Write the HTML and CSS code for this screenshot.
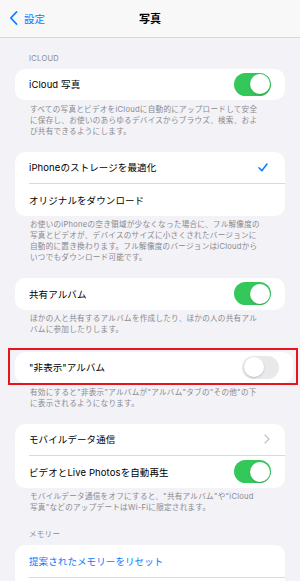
FILE: index.html
```html
<!DOCTYPE html>
<html lang="ja">
<head>
<meta charset="utf-8">
<title>写真</title>
<link rel="stylesheet" href="styles.css">
</head>
<body>
<div class="nav">
  <div class="back">
    <svg class="back-chev" width="9" height="14" viewBox="0 0 9 14"><path d="M7.5 1 L1.8 7 L7.5 13" fill="none" stroke="#0a7aff" stroke-width="1.8" stroke-linecap="round" stroke-linejoin="round"/></svg>
    <span>設定</span>
  </div>
  <div class="title">写真</div>
</div>

<div class="header first">ICLOUD</div>
<div class="card">
  <div class="row"><span class="label">iCloud 写真</span><span class="toggle on"><span class="knob"></span></span></div>
</div>
<div class="desc">すべての写真とビデオをiCloudに自動的にアップロードして安全<br>に保存し、お使いのあらゆるデバイスからブラウズ、検索、およ<br>び共有できるようにします。</div>

<div class="card gap">
  <div class="row"><span class="label">iPhoneのストレージを最適化</span>
    <svg class="check" width="10" height="9" viewBox="0 0 10 9"><path d="M1 4.8 L3.8 7.8 L9 1" fill="none" stroke="#0a7aff" stroke-width="1.5" stroke-linecap="round" stroke-linejoin="round"/></svg>
  </div>
  <div class="row sep"><span class="label">オリジナルをダウンロード</span></div>
</div>
<div class="desc">お使いのiPhoneの空き領域が少なくなった場合に、フル解像度の<br>写真とビデオが、デバイスのサイズに小さくされたバージョンに<br>自動的に置き換わります。フル解像度のバージョンはiCloudから<br>いつでもダウンロード可能です。</div>

<div class="card gap">
  <div class="row"><span class="label">共有アルバム</span><span class="toggle on"><span class="knob"></span></span></div>
</div>
<div class="desc">ほかの人と共有するアルバムを作成したり、ほかの人の共有アル<br>バムに参加したりします。</div>

<div class="highlight">
  <div class="card inner">
    <div class="row"><span class="label">"非表示"アルバム</span><span class="toggle off"><span class="knob"></span></span></div>
  </div>
</div>
<div class="desc d4">有効にすると"非表示"アルバムが"アルバム"タブの"その他"の下<br>に表示されるようになります。</div>

<div class="card gap">
  <div class="row"><span class="label">モバイルデータ通信</span>
    <svg class="chev" width="6" height="10" viewBox="0 0 6 10"><path d="M1 1 L5 5 L1 9" fill="none" stroke="#c4c4c7" stroke-width="1.3" stroke-linecap="round" stroke-linejoin="round"/></svg>
  </div>
  <div class="row sep"><span class="label">ビデオとLive Photosを自動再生</span><span class="toggle on"><span class="knob"></span></span></div>
</div>
<div class="desc">モバイルデータ通信をオフにすると、"共有アルバム"や"iCloud<br>写真"などのアップデートはWi-Fiに限定されます。</div>

<div class="header second">メモリー</div>
<div class="card">
  <div class="row"><span class="label link">提案されたメモリーをリセット</span></div>
  <div class="row sep"></div>
</div>
</body>
</html>
```

FILE: styles.css
```css
html, body {
  margin: 0;
  padding: 0;
}
body {
  background: #f2f2f7;
  font-family: Inter, "Noto Sans CJK JP", sans-serif;
  color: #000;
  width: 300px;
  height: 581px;
  overflow: hidden;
}
.nav {
  height: 36.5px;
  background: #f8f8f9;
  border-bottom: 0.5px solid #d8d8dc;
  display: flex;
  align-items: center;
  justify-content: center;
  position: relative;
}
.back {
  position: absolute;
  left: 9px;
  top: 0;
  height: 100%;
  display: flex;
  align-items: center;
  gap: 6px;
  color: #0a7aff;
  font-size: 10.5px;
}
.title {
  font-size: 11px;
  font-weight: 700;
}
.header {
  font-size: 7.5px;
  line-height: 10px;
  color: #8a8a8e;
  padding: 0 29px 5px;
  letter-spacing: 0.3px;
}
.header.first { padding-top: 16px; }
.header.second { padding-top: 17px; }
.card {
  background: #fff;
  margin: 0 15px;
  border-radius: 10px;
  overflow: hidden;
}
.card.gap { margin-top: 15px; }
.row {
  height: 31.5px;
  margin-left: 14px;
  padding-right: 14px;
  display: flex;
  align-items: center;
  justify-content: space-between;
}
.row.sep {
  border-top: 0.5px solid #d9d9dd;
  height: 31.5px;
}
.label {
  font-size: 9.5px;
  letter-spacing: 0.1px;
}
.label.link { color: #0a7aff; }
.toggle {
  width: 37px;
  height: 23px;
  border-radius: 12px;
  position: relative;
  display: block;
  flex: none;
}
.toggle.on { background: #34c759; }
.toggle.off { background: #e9e9eb; }
.knob {
  position: absolute;
  top: 1.5px;
  width: 20px;
  height: 20px;
  border-radius: 50%;
  background: #fff;
  box-shadow: 0 1px 2px rgba(0,0,0,0.18);
}
.toggle.on .knob { right: 1.5px; }
.toggle.off .knob { left: 1.5px; }
.check { margin-right: 3px; }
.chev { margin-right: 1px; }
.desc {
  font-size: 7.6px;
  line-height: 11px;
  color: #8a8a8e;
  padding: 3.5px 0 0 30px;
  letter-spacing: 0.25px;
  white-space: nowrap;
}
.highlight {
  margin: 12.5px 0 0 8px;
  width: 278px;
  border: 2px solid #e5141d;
  padding: 2px 3px 0 5px;
}
.card.inner { margin: 0; }
.desc.d4 { padding-top: 1.5px; }
```
